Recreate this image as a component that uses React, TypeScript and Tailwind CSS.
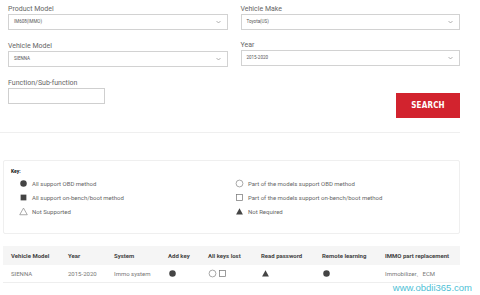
import React from "react";

const Chevron = () => (
  <svg width="5" height="4" viewBox="0 0 10 6" className="shrink-0">
    <path d="M1 1l4 4 4-4" fill="none" stroke="#888" strokeWidth="1.3" />
  </svg>
);

function Field({ label, value, mt }: { label: string; value: string; mt?: string }) {
  return (
    <div className={mt}>
      <div className="text-[7px] leading-[8px] text-[#666]">{label}</div>
      <div className="mt-[1px] flex h-[16px] items-center justify-between border border-[#d2d2d2] bg-white pl-[5px] pr-[6px]">
        <span className="text-[4.5px] text-[#555]">{value}</span>
        <Chevron />
      </div>
    </div>
  );
}

type IconKind = "dot" | "square" | "tri" | "ring" | "box" | "triFill";

function KeyIcon({ kind }: { kind: IconKind }) {
  return (
    <svg width="9" height="9" viewBox="0 0 10 10" className="shrink-0">
      {kind === "dot" && <circle cx="5" cy="5" r="3.6" fill="#444" />}
      {kind === "square" && <rect x="1.8" y="1.8" width="6.4" height="6.4" fill="#444" />}
      {kind === "tri" && <path d="M5 1.2L9.2 8.6H0.8Z" fill="none" stroke="#888" strokeWidth="0.8" />}
      {kind === "ring" && <circle cx="5" cy="5" r="3.8" fill="none" stroke="#888" strokeWidth="0.8" />}
      {kind === "box" && <rect x="1.6" y="1.6" width="6.8" height="6.8" fill="none" stroke="#777" strokeWidth="0.8" />}
      {kind === "triFill" && <path d="M5 1.5L8.8 8.4H1.2Z" fill="#444" />}
    </svg>
  );
}

function KeyRow({ kind, text }: { kind: IconKind; text: string }) {
  return (
    <div className="flex h-[14px] items-center gap-[4px]">
      <KeyIcon kind={kind} />
      <span className="text-[6px] text-[#666]">{text}</span>
    </div>
  );
}

const cols = "grid grid-cols-[57px_46px_54px_40px_53px_61px_63px_1fr] items-center pl-[8px]";

export default function App() {
  return (
    <div className="relative h-[295px] w-[480px] overflow-hidden bg-white font-['Roboto',sans-serif]">
      <div className="px-[8px] pt-[5px] w-[468px]">
        <div className="grid grid-cols-2 gap-x-[13px]">
          <Field label="Product Model" value="IM608(IMMO)" />
          <Field label="Vehicle Make" value="Toyota(US)" />
          <Field label="Vehicle Model" value="SIENNA" mt="mt-[12px]" />
          <Field label="Year" value="2015-2020" mt="mt-[11px]" />
        </div>
        <div className="mt-[12px] flex items-start justify-between">
          <div>
            <div className="text-[7px] leading-[8px] text-[#666]">Function/Sub-function</div>
            <div className="mt-[1px] h-[16px] w-[97px] border border-[#cfcfcf]" />
          </div>
          <button className="mt-[14px] flex h-[25px] w-[64px] items-center justify-center bg-[#d2232e] font-['DejaVu_Sans_Condensed','Roboto',sans-serif] text-[8px] font-bold tracking-[0.2px] text-white">
            SEARCH
          </button>
        </div>
      </div>

      <div className="mt-[14px] h-px w-[460px] bg-[#efefef]" />

      <div className="ml-[3px] mt-[27px] h-[74px] w-[457px] rounded-[2px] border border-[#efefef] px-[7px] pt-[7px]">
        <div className="text-[5px] font-bold leading-[6px] text-[#111]">Key:</div>
        <div className="mt-[2px] grid grid-cols-[216px_1fr] pl-[8px]">
          <div>
            <KeyRow kind="dot" text="All support OBD method" />
            <KeyRow kind="square" text="All support on-bench/boot method" />
            <KeyRow kind="tri" text="Not Supported" />
          </div>
          <div>
            <KeyRow kind="ring" text="Part of the models support OBD method" />
            <KeyRow kind="box" text="Part of the models support on-bench/boot method" />
            <KeyRow kind="triFill" text="Not Required" />
          </div>
        </div>
      </div>

      <div className="ml-[3px] mt-[12px] w-[457px] text-[6px]">
        <div className={`${cols} h-[19px] bg-[#f5f5f5] font-bold text-[#444]`}>
          <span>Vehicle Model</span>
          <span>Year</span>
          <span>System</span>
          <span>Add key</span>
          <span>All keys lost</span>
          <span>Read password</span>
          <span>Remote learning</span>
          <span>IMMO part replacement</span>
        </div>
        <div className={`${cols} h-[18px] border-b border-[#eeeeee] text-[#777]`}>
          <span>SIENNA</span>
          <span>2015-2020</span>
          <span>Immo system</span>
          <span className="flex"><KeyIcon kind="dot" /></span>
          <span className="flex gap-[1px]"><KeyIcon kind="ring" /><KeyIcon kind="box" /></span>
          <span className="flex"><KeyIcon kind="triFill" /></span>
          <span className="flex"><KeyIcon kind="dot" /></span>
          <span>Immobilizer、ECM</span>
        </div>
      </div>

      <div className="absolute bottom-[0px] right-[8px] font-['Liberation_Sans',sans-serif] text-[9.5px] text-[#4fbfd6]">
        www.obdii365.com
      </div>
    </div>
  );
}
